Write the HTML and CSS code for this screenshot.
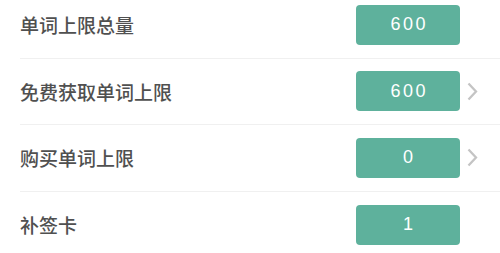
FILE: index.html
```html
<!DOCTYPE html>
<html lang="zh">
<head>
<meta charset="utf-8">
<link rel="stylesheet" href="styles.css">
</head>
<body>
<div class="list">
  <div class="row">
    <span class="label">单词上限总量</span>
    <span class="value">600</span>
    <span class="arrow"></span>
  </div>
  <div class="row">
    <span class="label">免费获取单词上限</span>
    <span class="value">600</span>
    <span class="arrow"><svg width="11" height="19" viewBox="0 0 11 19"><path d="M1.5 1.5 L9 9.5 L1.5 17.5" fill="none" stroke="#c4c4c4" stroke-width="2.3"/></svg></span>
  </div>
  <div class="row">
    <span class="label">购买单词上限</span>
    <span class="value">0</span>
    <span class="arrow"><svg width="11" height="19" viewBox="0 0 11 19"><path d="M1.5 1.5 L9 9.5 L1.5 17.5" fill="none" stroke="#c4c4c4" stroke-width="2.3"/></svg></span>
  </div>
  <div class="row last">
    <span class="label">补签卡</span>
    <span class="value">1</span>
    <span class="arrow"></span>
  </div>
</div>
</body>
</html>
```
FILE: styles.css
```css
html, body {
  margin: 0;
  padding: 0;
  background: #ffffff;
  overflow: hidden;
}
.list {
  margin-top: -8px;
  margin-left: 20px;
}
.row {
  height: 66.5px;
  box-sizing: border-box;
  border-bottom: 1px solid #f0f0f0;
  display: flex;
  align-items: center;
}
.row.last {
  border-bottom: none;
}
.label {
  flex: 1;
  font-family: "Noto Sans CJK SC", "Noto Sans", sans-serif;
  font-size: 19px;
  font-weight: 500;
  color: #505050;
}
.value {
  width: 104px;
  height: 40px;
  border-radius: 4px;
  background: #5eb19c;
  color: #ffffff;
  font-family: "Liberation Sans", Arial, sans-serif;
  font-size: 18px;
  letter-spacing: 2.5px;
  display: flex;
  align-items: center;
  justify-content: center;
  padding-left: 2.5px;
  box-sizing: border-box;
}
.arrow {
  width: 40px;
  display: flex;
  align-items: center;
  padding-left: 7px;
  box-sizing: border-box;
  height: 19px;
}
```
